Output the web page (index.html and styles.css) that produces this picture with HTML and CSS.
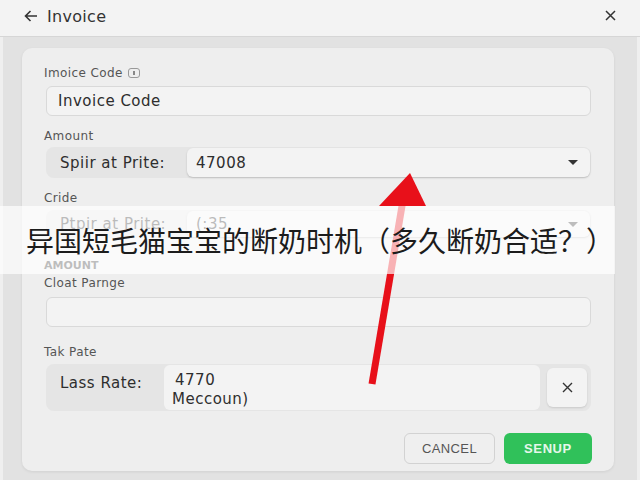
FILE: index.html
```html
<!DOCTYPE html>
<html lang="en">
<head>
  <meta charset="UTF-8">
  <meta name="viewport" content="width=device-width, initial-scale=1.0">
  <title>Invoice</title>
  <link rel="stylesheet" href="styles.css">
</head>
<body>
  <div class="window">
    <div class="topbar">
      <div class="topbar-title">
        <svg class="back-icon" width="14" height="12" viewBox="0 0 14 12">
          <path d="M13 6H1.5M6.5 1L1.5 6l5 5" fill="none" stroke="#333" stroke-width="1.6"/>
        </svg>
        Invoice
      </div>
      <svg class="close-icon" width="11" height="11" viewBox="0 0 11 11">
        <path d="M1 1l9 9M10 1l-9 9" stroke="#333" stroke-width="1.5"/>
      </svg>
    </div>

    <div class="main">
      <div class="card">
        <div class="label first">Imoice Code <span class="info-chip"><i></i></span></div>
        <div class="input">Invoice Code</div>

        <div class="label gap-md">Amount</div>
        <div class="group tall-31">
          <div class="group-label">Spiir at Prite:</div>
          <div class="select">47008 <span class="caret"></span></div>
        </div>

        <div class="label gap-md">Cride</div>
        <div class="group tall-28 gap-sm">
          <div class="group-label">Ptpir at Prite:</div>
          <div class="select">(:35 <span class="caret"></span></div>
        </div>

        <div class="section-title">AMOUNT</div>
        <div class="label gap-xs">Cloat Parnge</div>
        <div class="input empty"></div>

        <div class="label gap-lg">Tak Pate</div>
        <div class="group rate-group gap-sm">
          <div class="group-label top">Lass Rate:</div>
          <div class="rate-text">
            <div class="rate-line indent">4770</div>
            <div class="rate-line">Meccoun)</div>
          </div>
          <div class="clear-btn">
            <svg width="11" height="11" viewBox="0 0 11 11">
              <path d="M1 1l9 9M10 1l-9 9" stroke="#333" stroke-width="1.4"/>
            </svg>
          </div>
        </div>

        <div class="actions">
          <div class="btn btn-cancel">CANCEL</div>
          <div class="btn btn-primary">SENUP</div>
        </div>
      </div>
    </div>

    <!-- annotation arrow sits under the caption band -->
    <svg class="arrow" width="640" height="480" viewBox="0 0 640 480">
      <line x1="403" y1="200" x2="372" y2="384" stroke="#e8101a" stroke-width="7"/>
      <polygon points="410,173 379,206 426,206" fill="#e8101a"/>
    </svg>

    <div class="caption">异国短毛猫宝宝的断奶时机（多久断奶合适？）</div>
  </div>
</body>
</html>
```

FILE: styles.css
```css
:root {
  --page-bg: #e2e2e2;
  --card-bg: #eeeeee;
  --field-bg: #f3f3f3;
  --group-bg: #e5e5e5;
  --text: #2e2e2e;
  --muted: #555;
  --green: #30c15a;
}

body {
  margin: 0;
  font-family: 'DejaVu Sans', 'Liberation Sans', sans-serif;
  color: var(--text);
  background-color: var(--page-bg);
}

.window {
  position: relative;
  width: 640px;
  height: 480px;
  overflow: hidden;
  box-shadow: inset 3px 0 #efefef, inset -3px 0 #efefef;
}

.topbar {
  height: 36px;
  display: flex;
  justify-content: space-between;
  align-items: center;
  padding: 0 24px 0 24px;
  background-color: #f3f3f3;
  border-bottom: 1px solid #d6d6d6;
}

.topbar-title {
  display: flex;
  align-items: center;
  gap: 9px;
  font-size: 16px;
  letter-spacing: 0.3px;
  color: #333;
  margin-top: -4px;
}

.close-icon {
  margin-top: -6px;
}

.main {
  padding: 11px 26px 0 22px;
}

.card {
  background-color: var(--card-bg);
  border-radius: 10px;
  box-shadow: 0 1px 3px rgba(0, 0, 0, 0.08);
  padding: 18px 23px 7px 24px;
  display: flex;
  flex-direction: column;
}

.label {
  font-size: 12px;
  line-height: 14px;
  letter-spacing: 0.4px;
  color: var(--muted);
  margin-left: -2px;
  margin-bottom: 4px;
  display: flex;
  align-items: center;
  gap: 5px;
}

.label.first { margin-bottom: 6px; }
.gap-md { margin-top: 13px; }
.gap-lg { margin-top: 18px; }
.gap-xs { margin-top: 3px; margin-bottom: 7px; }
.gap-sm { margin-top: 1px; }

.info-chip {
  width: 10px;
  height: 8px;
  border: 1px solid #999;
  border-radius: 3px;
  display: inline-flex;
  justify-content: center;
  align-items: center;
}

.info-chip i {
  width: 2px;
  height: 4px;
  background: #888;
}

.input {
  height: 28px;
  border: 1px solid #d9d9d9;
  border-radius: 6px;
  background-color: var(--field-bg);
  font-size: 15px;
  letter-spacing: 0.5px;
  line-height: 28px;
  padding: 0 11px;
}

.group {
  display: flex;
  align-items: center;
  background-color: var(--group-bg);
  border-radius: 8px;
  padding: 1px 1px 1px 0;
  font-size: 15px;
  letter-spacing: 0.5px;
}

.tall-31 { height: 29px; }
.tall-28 { height: 26px; }

.group-label {
  width: 127px;
  padding-left: 14px;
  flex-shrink: 0;
}

.select {
  flex: 1;
  align-self: stretch;
  display: flex;
  justify-content: space-between;
  align-items: center;
  padding: 0 12px 0 9px;
  background-color: var(--field-bg);
  border-radius: 6px;
  box-shadow: 0 1px 2px rgba(0, 0, 0, 0.18);
}

.caret {
  width: 0;
  height: 0;
  border-left: 5px solid transparent;
  border-right: 5px solid transparent;
  border-top: 5px solid #333;
}

.section-title {
  margin-top: 21px;
  margin-left: -2px;
  font-size: 11px;
  line-height: 14px;
  font-weight: bold;
  color: #333;
}

.rate-group {
  height: 45px;
  align-items: stretch;
  padding: 1px 4px 1px 0;
}

.group-label.top {
  width: 104px;
  padding-top: 9px;
}

.rate-text {
  flex: 1;
  background-color: var(--field-bg);
  border-radius: 6px;
  padding: 6px 8px 0;
  line-height: 19px;
}

.rate-line.indent { padding-left: 3px; }

.clear-btn {
  width: 40px;
  margin: 3px 0 3px 7px;
  display: flex;
  justify-content: center;
  align-items: center;
  background-color: var(--field-bg);
  border-radius: 6px;
  box-shadow: 0 1px 2px rgba(0, 0, 0, 0.12);
}

.actions {
  display: flex;
  justify-content: flex-end;
  gap: 9px;
  margin-top: 22px;
  margin-right: -1px;
}

.btn {
  height: 31px;
  display: flex;
  justify-content: center;
  align-items: center;
  border-radius: 6px;
  font-family: 'Liberation Sans', sans-serif;
  font-size: 13px;
  letter-spacing: 0.4px;
}

.btn-cancel {
  width: 89px;
  border: 1px solid #d2d2d2;
  background-color: #efefef;
  color: #555;
  height: 29px;
}

.btn-primary {
  width: 88px;
  background-color: var(--green);
  color: #e6f7ea;
  font-weight: bold;
  letter-spacing: 0.6px;
}

.arrow {
  position: absolute;
  top: 0;
  left: 0;
  pointer-events: none;
}

.caption {
  position: absolute;
  top: 206px;
  left: 0;
  width: 589px;
  height: 68px;
  padding-left: 26px;
  background-color: rgba(255, 255, 255, 0.68);
  font-family: 'Noto Sans CJK SC', sans-serif;
  font-size: 28px;
  line-height: 68px;
  color: #1c1c1c;
  white-space: nowrap;
}
```
